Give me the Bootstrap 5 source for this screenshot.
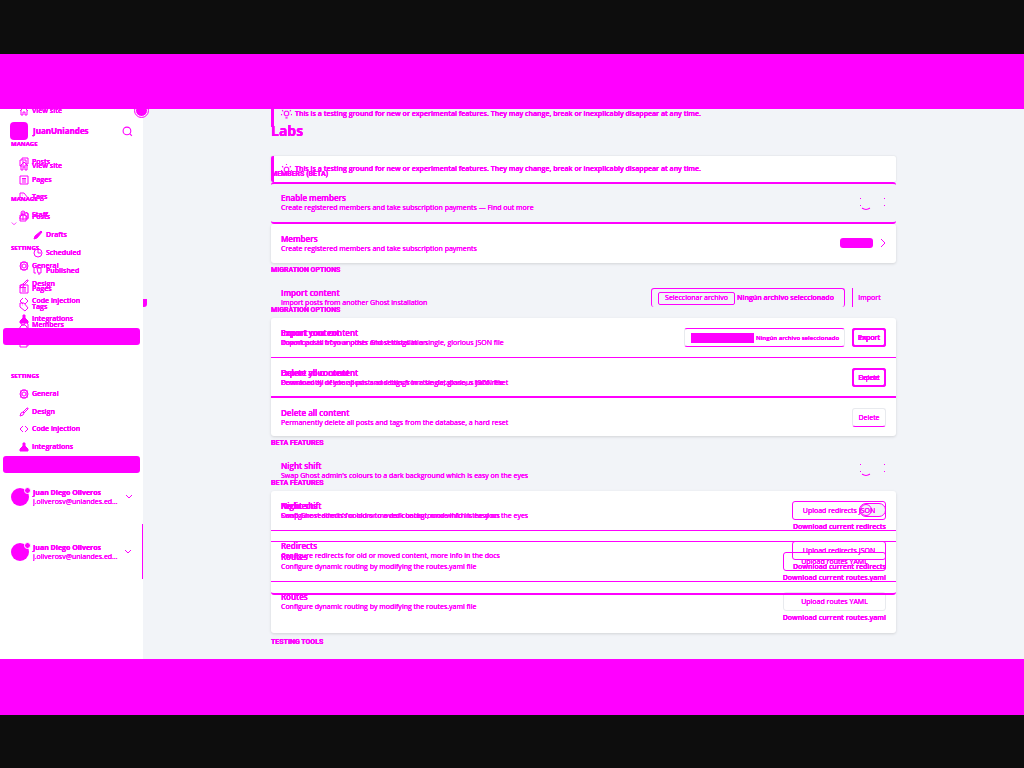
<!DOCTYPE html>
<html lang="en">
<head>
<meta charset="utf-8">
<meta name="viewport" content="width=device-width, initial-scale=1">
<title>Labs</title>
<link href="https://cdn.jsdelivr.net/npm/bootstrap@5.3.0/dist/css/bootstrap.min.css" rel="stylesheet">
<style>
:root{--hot:#f0f}
body{font:7px/10px "Open Sans","Noto Sans",sans-serif;color:var(--hot);background:#0d0d0d;text-shadow:0 0 0 var(--hot),0 0 0 var(--hot)}
a,button{color:var(--hot);text-decoration:none}
button{font:inherit;background:none;border:0;padding:0;text-shadow:inherit}
svg{fill:none;stroke:currentColor;stroke-width:1;flex:none}
.edge-top{height:54px}.edge-end{height:53px}
.band{height:55px;background:var(--hot)}
.band-end{height:56px}
.stage{display:grid;grid-template-columns:143px minmax(0,1fr);min-height:550px;overflow:hidden;background:#f2f4f8}
.side,.pane{display:grid}
.side{background:#fff}
.sheet{grid-area:1/1;min-width:0}
.column{width:100%;max-width:625px;margin:0 auto}
/* sidebar */
.site-head{height:44px;padding:0 10px}
.site-logo{width:18px;height:18px;border-radius:4px;background:var(--hot)}
.site-name{font-size:8px;font-weight:700;margin-left:5px}
.menu{list-style:none;margin:0;padding:0 0 0 19px}
.menu li{display:flex;flex:1;align-items:center;min-height:0}
.menu a{display:flex;align-items:center;gap:3px;font-weight:600}
.menu .inner{padding-left:14px}
.menu-4{height:71px}.menu-8{height:144px}.menu-1{height:18px}
.group{padding-left:11px;font-size:6px;font-weight:700}
.current{height:17px;margin:0 3px;border-radius:3px;background:var(--hot)}
.current a{display:block;height:100%}
.person{height:55px;padding:0 10px 0 11px;line-height:9px}
.face{width:18px;height:18px;border-radius:50%;background:var(--hot);position:relative;flex:none}
.face::after{content:"";position:absolute;right:-2px;top:-1px;width:7px;height:7px;border-radius:50%;background:var(--hot);border:1px solid #fff}
.who{margin-left:4px;width:88px}
.person.lined{border-right:1px solid var(--hot)}
.knob{position:absolute;left:135px;top:-5px;width:13px;height:13px;border-radius:50%;background:var(--hot);border:1px solid #fff;outline:1px solid var(--hot)}
.tab-mark{position:absolute;left:143px;top:190px;width:4px;height:8px;background:var(--hot);border-radius:0 0 3px 0}
.down-arrow{padding-left:11px;height:0;overflow:visible}
/* main */
.page-head{height:47px;padding-top:12px;font-size:14px;line-height:20px;font-weight:700;margin:0}
.tip{height:26px;border-left:3px solid var(--hot);padding-left:7px;gap:3px;font-weight:600}
.tip.filled{background:#fff;border-radius:2px;box-shadow:0 0 2px #0002}
.tip.cut{height:18px;padding-bottom:9px}
.heading{font:700 7px/10px Roboto,sans-serif;margin:42px 0 3px}
.box-card{border-radius:3px}
.filled.box-card{background:#fff;box-shadow:0 1px 3px #0002}
.gap-card{margin-top:42px}
.entry{padding:10px 10px 0;height:40px;display:flex;justify-content:space-between;align-items:flex-start}
.entry:last-child{height:38px}
.entry.tall,.entry.tall:last-child{height:51px}
.entry.one{height:39px}
.ruled{border-bottom:1px solid var(--hot)}
.ruled-2{border-bottom:2px solid var(--hot)}
.over-2{border-top:2px solid var(--hot)}
.switch-card{height:42px}
.switch-card .entry{padding-top:9px}
h3{font-size:8px;line-height:10px;font-weight:600;margin:0}
p{margin:0;white-space:nowrap}
.line-btn{height:19px;border:1px solid var(--hot);border-radius:3px;text-align:center}
.line-btn.pale{border-color:#e8eaee}
.small-act{width:34px;border-width:2px}
.small-act.pale{border-width:1px;border-bottom-color:var(--hot)}
.small-act.bare{border:0;border-left:1px solid var(--hot);border-radius:0}
.redirects{width:94px}.routes{width:103px}
.side-act{text-align:right}
.side-act a{display:block;line-height:14px;font-weight:600}
.picker{height:19px;border:1px solid var(--hot);border-radius:3px;padding:0 6px;gap:2px;white-space:nowrap}
.picker.open-end{width:194px;border-bottom:0;font-weight:600}
.picker.closed{width:161px;border-left-color:#e8eaee;border-right-color:#e8eaee;font-size:6px;font-weight:600}
.pick{border:1px solid var(--hot);border-radius:2px;width:77px;height:13px;line-height:10px;flex:none;font-weight:400}
.pick.solid{background:var(--hot);width:63px;height:10px;border:0;border-radius:0}
.field-row{gap:7px}
.pill{width:33px;height:10px;border-radius:3px;background:var(--hot)}
.more{margin-right:-1px}
.toggle{appearance:none;width:27px;height:14px;margin:0;border-radius:7px;border:1px solid transparent;background:none}
.toggle::after{content:"";display:block;width:12px;height:12px;border-radius:50%;border:1px solid transparent;border-bottom-color:var(--hot)}
.toggle.dots{border-radius:3px;background:conic-gradient(var(--hot) 0 0) 0 0/1px 1px no-repeat,conic-gradient(var(--hot) 0 0) 100% 0/1px 1px no-repeat,conic-gradient(var(--hot) 0 0) 0 7px/1px 1px no-repeat,conic-gradient(var(--hot) 0 0) 100% 7px/1px 1px no-repeat}
.toggle.ring{border:1px solid var(--hot);background:#f2f4f8}
.toggle.ring::after{border-color:var(--hot)}
</style>
</head>
<body class="min-vh-100 d-flex flex-column">
<svg width="0" height="0" class="position-absolute">
<symbol id="home" viewBox="0 0 10 10"><path d="M1 5l4-4 4 4M2 4v5h2V6h2v3h2V4"/></symbol>
<symbol id="post" viewBox="0 0 10 10"><path d="M1 3h6v6H1zM3 3V1h6v6H7M3 5h2M3 7h2"/></symbol>
<symbol id="sheet" viewBox="0 0 10 10"><path d="M1 1h8v8H1zM3 3.500h4M3 5h4M3 7h4"/></symbol>
<symbol id="tag" viewBox="0 0 10 10"><path d="M1 1h4l4 5-3 3-5-4zM3 3h.5"/></symbol>
<symbol id="people" viewBox="0 0 10 10"><circle cx="4" cy="3" r="2"/><path d="M1 9V7l2-2h3l2 2v2zM7 2l2 2v4"/></symbol>
<symbol id="pen" viewBox="0 0 10 10"><path fill="currentColor" d="M1 9l1-3 6-5 1 1-5 6z"/></symbol>
<symbol id="clock" viewBox="0 0 10 10"><circle cx="5" cy="5" r="4"/><path d="M5 2v3h3"/></symbol>
<symbol id="pub" viewBox="0 0 10 10"><path d="M1 2v5h2M4 2h4v5H5zM6 7v2"/></symbol>
<symbol id="gear" viewBox="0 0 10 10"><circle cx="5" cy="5" r="4"/><circle cx="5" cy="5" r="2"/><path d="M2 1v8M8 1v8M3 1h4M3 9h4"/></symbol>
<symbol id="brush" viewBox="0 0 10 10"><path d="M1 9l1-3 2-1 1 1-1 2zM4 5l4-4h1v1L5 6"/></symbol>
<symbol id="code" viewBox="0 0 10 10"><path d="M4 2L1 5l3 3M6 2l3 3-3 3"/></symbol>
<symbol id="blocks" viewBox="0 0 10 10"><path fill="currentColor" d="M4 1h2v3l3 3v2H1V7l3-3z"/></symbol>
<symbol id="find" viewBox="0 0 10 10"><circle cx="4.500" cy="4.500" r="3.500"/><path d="M7 7l2 2"/></symbol>
<symbol id="bulb" viewBox="0 0 10 10"><path d="M3 6V4l1-1h2l1 1v2L6 7H4zM4 9h2M5 0v1M1 2l1 1M9 2L8 3M0 6h1M9 6h1"/></symbol>
<symbol id="down" viewBox="0 0 8 8"><path d="M1 2l3 3 3-3"/></symbol>
<symbol id="next" viewBox="0 0 8 10"><path d="M2 1l4 4-4 4"/></symbol>
</svg>
<div class="edge-top"></div>
<div class="band"></div>
<div class="stage flex-grow-1">
 <aside class="side position-relative">
  <nav class="sheet">
   <div class="site-head d-flex align-items-center"><span class="site-logo"></span><span class="site-name">JuanUniandes</span><button class="ms-auto d-flex" aria-label="Search"><svg width="11" height="11"><use href="#find"/></svg></button></div>
   <ul class="menu menu-1 d-flex flex-column mt-1"><li><a href="#"><svg width="10" height="10"><use href="#home"/></svg>View site</a></li></ul>
   <div class="group" style="margin-top:19px">MANAGE</div>
   <ul class="menu menu-8 d-flex flex-column mt-1">
    <li><a href="#"><svg width="10" height="10"><use href="#post"/></svg>Posts</a></li>
    <li class="inner"><a href="#"><svg width="10" height="10"><use href="#pen"/></svg>Drafts</a></li>
    <li class="inner"><a href="#"><svg width="10" height="10"><use href="#clock"/></svg>Scheduled</a></li>
    <li class="inner"><a href="#"><svg width="10" height="10"><use href="#pub"/></svg>Published</a></li>
    <li><a href="#"><svg width="10" height="10"><use href="#sheet"/></svg>Pages</a></li>
    <li><a href="#"><svg width="10" height="10"><use href="#tag"/></svg>Tags</a></li>
    <li><a href="#"><svg width="10" height="10"><use href="#people"/></svg>Members</a></li>
    <li><a href="#"><svg width="10" height="10"><use href="#people"/></svg>Staff</a></li>
   </ul>
   <div class="group" style="margin-top:19px">SETTINGS</div>
   <ul class="menu menu-4 d-flex flex-column mt-1">
    <li><a href="#"><svg width="10" height="10"><use href="#gear"/></svg>General</a></li>
    <li><a href="#"><svg width="10" height="10"><use href="#brush"/></svg>Design</a></li>
    <li><a href="#"><svg width="10" height="10"><use href="#code"/></svg>Code injection</a></li>
    <li><a href="#"><svg width="10" height="10"><use href="#blocks"/></svg>Integrations</a></li>
   </ul>
   <div class="current"><a href="#" aria-label="Labs"></a></div>
   <div class="person lined d-flex align-items-center" style="margin-top:51px"><span class="face"></span><div class="who"><b>Juan Diego Oliveros</b><div class="text-truncate">j.oliverosv@uniandes.edu.co</div></div><button class="ms-auto d-flex" aria-label="Account"><svg width="8" height="8"><use href="#down"/></svg></button></div>
  </nav>
  <nav class="sheet">
   <ul class="menu menu-1 d-flex flex-column" style="margin-top:-7px"><li><a href="#"><svg width="10" height="10"><use href="#home"/></svg>View site</a></li></ul>
   <div class="group" style="margin-top:19px">MANAGE</div>
   <ul class="menu menu-4 d-flex flex-column mt-1">
    <li><a href="#"><svg width="10" height="10"><use href="#post"/></svg>Posts</a></li>
    <li><a href="#"><svg width="10" height="10"><use href="#sheet"/></svg>Pages</a></li>
    <li><a href="#"><svg width="10" height="10"><use href="#tag"/></svg>Tags</a></li>
    <li><a href="#"><svg width="10" height="10"><use href="#people"/></svg>Staff</a></li>
   </ul>
   <div class="down-arrow d-flex align-items-center"><svg width="6" height="6"><use href="#down"/></svg></div>
   <div class="group" style="margin-top:19px">SETTINGS</div>
   <ul class="menu menu-4 d-flex flex-column mt-1">
    <li><a href="#"><svg width="10" height="10"><use href="#gear"/></svg>General</a></li>
    <li><a href="#"><svg width="10" height="10"><use href="#brush"/></svg>Design</a></li>
    <li><a href="#"><svg width="10" height="10"><use href="#code"/></svg>Code injection</a></li>
    <li><a href="#"><svg width="10" height="10"><use href="#blocks"/></svg>Integrations</a></li>
   </ul>
   <div class="current"><a href="#" aria-label="Labs"></a></div>
   <div class="person d-flex align-items-center" style="margin-top:124px"><span class="face"></span><div class="who"><b>Juan Diego Oliveros</b><div class="text-truncate">j.oliverosv@uniandes.edu.co</div></div><button class="ms-auto d-flex" aria-label="Account"><svg width="8" height="8"><use href="#down"/></svg></button></div>
  </nav>
  <span class="knob"></span><span class="tab-mark"></span>
 </aside>
 <main class="pane">
  <section class="sheet column">
   <h1 class="page-head">Labs</h1>
   <div class="tip filled d-flex align-items-center"><svg width="11" height="11"><use href="#bulb"/></svg><p>This is a testing ground for new or experimental features. They may change, break or inexplicably disappear at any time.</p></div>
   <div class="box-card filled gap-card"><div class="entry one"><div><h3>Members</h3><p>Create registered members and take subscription payments</p></div><div class="more d-flex align-items-center gap-1 mt-1"><span class="pill"></span><button class="d-flex" style="margin-left:2px" aria-label="Open"><svg width="8" height="10"><use href="#next"/></svg></button></div></div></div>
   <h2 class="heading">MIGRATION OPTIONS</h2>
   <div class="box-card filled">
    <div class="entry ruled"><div><h3>Import content</h3><p>Import posts from another Ghost installation</p></div><div class="d-flex field-row"><div class="picker closed d-flex align-items-center"><button class="pick solid" aria-label="Seleccionar archivo"></button><span>Ningún archivo seleccionado</span></div><button class="line-btn small-act">Import</button></div></div>
    <div class="entry ruled-2"><div><h3>Export your content</h3><p>Download all of your posts and settings in a single, glorious JSON file</p></div><button class="line-btn small-act">Export</button></div>
    <div class="entry"><div><h3>Delete all content</h3><p>Permanently delete all posts and tags from the database, a hard reset</p></div><button class="line-btn small-act pale">Delete</button></div>
   </div>
   <h2 class="heading">BETA FEATURES</h2>
   <div class="box-card filled">
    <div class="entry ruled"><div><h3>Night shift</h3><p>Swap Ghost admin's colours to a dark background which is easy on the eyes</p></div><input type="checkbox" class="toggle ring" style="margin-top:2px" aria-label="Night shift"></div>
    <div class="entry tall ruled"><div><h3>Redirects</h3><p>Configure redirects for old or moved content, more info in the docs</p></div><div class="side-act"><button class="line-btn redirects">Upload redirects JSON</button><a href="#">Download current redirects</a></div></div>
    <div class="entry tall"><div><h3>Routes</h3><p>Configure dynamic routing by modifying the routes.yaml file</p></div><div class="side-act"><button class="line-btn pale routes">Upload routes YAML</button><a href="#">Download current routes.yaml</a></div></div>
   </div>
  </section>
  <section class="sheet column">
   <div class="tip cut d-flex align-items-center"><svg width="11" height="11"><use href="#bulb"/></svg><p>This is a testing ground for new or experimental features. They may change, break or inexplicably disappear at any time.</p></div>
   <h2 class="heading">MEMBERS (BETA)</h2>
   <div class="box-card over-2 ruled-2 switch-card"><div class="entry"><div><h3>Enable members</h3><p>Create registered members and take subscription payments — Find out more</p></div><input type="checkbox" class="toggle dots mt-1" aria-label="Enable members"></div></div>
   <h2 class="heading" style="margin-top:41px">MIGRATION OPTIONS</h2>
   <div class="box-card">
    <div class="entry"><div><h3>Import content</h3><p>Import posts from another Ghost installation</p></div><div class="d-flex field-row"><div class="picker open-end d-flex align-items-center"><button class="pick">Seleccionar archivo</button><span>Ningún archivo seleccionado</span></div><button class="line-btn small-act bare">Import</button></div></div>
    <div class="entry ruled"><div><h3>Export your content</h3><p>Download all of your posts and settings in a single, glorious JSON file</p></div><button class="line-btn small-act">Export</button></div>
    <div class="entry"><div><h3>Delete all content</h3><p>Permanently delete all posts and tags from the database, a hard reset</p></div><button class="line-btn small-act">Delete</button></div>
   </div>
   <h2 class="heading">BETA FEATURES</h2>
   <div class="box-card ruled-2">
    <div class="entry"><div><h3>Night shift</h3><p>Swap Ghost admin's colours to a dark background which is easy on the eyes</p></div><input type="checkbox" class="toggle dots" style="margin-top:2px" aria-label="Night shift dimmed"></div>
    <div class="entry tall ruled"><div><h3>Redirects</h3><p>Configure redirects for old or moved content, more info in the docs</p></div><div class="side-act"><button class="line-btn redirects">Upload redirects JSON</button><a href="#">Download current redirects</a></div></div>
    <div class="entry tall"><div><h3>Routes</h3><p>Configure dynamic routing by modifying the routes.yaml file</p></div><div class="side-act"><button class="line-btn routes">Upload routes YAML</button><a href="#">Download current routes.yaml</a></div></div>
   </div>
   <h2 class="heading">TESTING TOOLS</h2>
  </section>
 </main>
</div>
<div class="band band-end"></div>
<div class="edge-end"></div>
<script src="https://cdn.jsdelivr.net/npm/bootstrap@5.3.0/dist/js/bootstrap.bundle.min.js"></script>
</body>
</html>
